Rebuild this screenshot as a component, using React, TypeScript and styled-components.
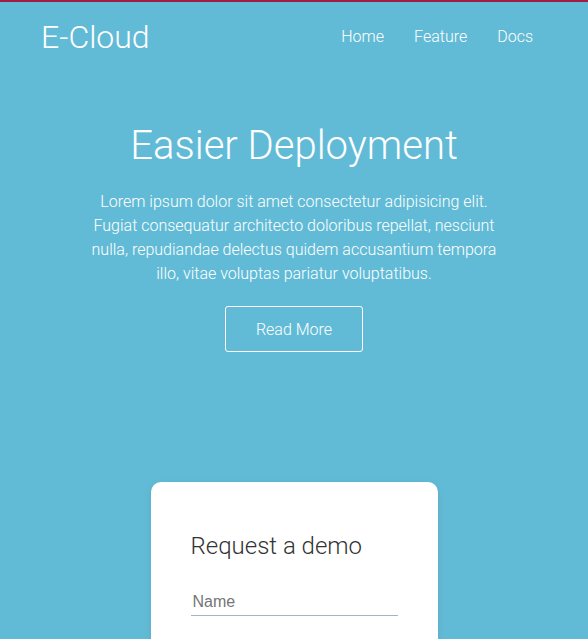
import React from "react";
import styled, { createGlobalStyle } from "styled-components";

const Global = createGlobalStyle`
  html, body { margin: 0; padding: 0; }
  body {
    background: #62bbd6;
    font-family: Roboto, "Liberation Sans", sans-serif;
    font-weight: 300;
    color: #fff;
    border-top: 2px solid #a01c45;
    min-height: 637px;
  }
  * { box-sizing: border-box; }
`;

const Page = styled.div`
  display: flex;
  flex-direction: column;
`;

const Header = styled.header`
  display: flex;
  align-items: center;
  justify-content: space-between;
  padding: 14px 55px 0 41px;
`;

const Logo = styled.div`
  font-size: 32px;
  font-weight: 300;
  line-height: 42px;
`;

const Nav = styled.nav`
  display: flex;
  gap: 30px;
  padding-bottom: 2px;
`;

const NavLink = styled.a`
  color: #fff;
  text-decoration: none;
  font-size: 16px;
  font-weight: 300;
`;

const Hero = styled.section`
  display: flex;
  flex-direction: column;
  align-items: center;
  text-align: center;
  padding-top: 64px;
`;

const Title = styled.h1`
  margin: 0;
  font-size: 40px;
  font-weight: 300;
  line-height: 48px;
`;

const Lead = styled.p`
  margin: 20px 0 0;
  max-width: 410px;
  font-size: 16px;
  line-height: 24px;
  font-weight: 300;
`;

const Button = styled.a`
  margin-top: 20px;
  width: 138px;
  height: 46px;
  display: flex;
  align-items: center;
  justify-content: center;
  border: 1px solid #fff;
  border-radius: 3px;
  font-size: 16px;
  color: #fff;
`;

const Card = styled.div`
  align-self: center;
  margin-top: 130px;
  width: 287px;
  background: #fff;
  border-radius: 10px;
  padding: 49px 40px 40px;
  box-shadow: 0 2px 8px rgba(0, 0, 0, 0.08);
  height: 180px;
`;

const CardTitle = styled.h2`
  margin: 0;
  font-size: 24px;
  font-weight: 300;
  color: #333;
  line-height: 30px;
`;

const Input = styled.input`
  display: block;
  margin-top: 30px;
  width: 207px;
  border: none;
  border-bottom: 1px solid #a5b3c9;
  padding: 2px 2px 4px;
  font-family: "Liberation Sans", Arial, sans-serif;
  font-size: 16px;
  outline: none;
  &::placeholder { color: #757575; }
`;

export default function App() {
  return (
    <Page>
      <Global />
      <Header>
        <Logo>E-Cloud</Logo>
        <Nav>
          <NavLink>Home</NavLink>
          <NavLink>Feature</NavLink>
          <NavLink>Docs</NavLink>
        </Nav>
      </Header>
      <Hero>
        <Title>Easier Deployment</Title>
        <Lead>
          Lorem ipsum dolor sit amet consectetur adipisicing elit. Fugiat consequatur architecto doloribus repellat, nesciunt nulla, repudiandae delectus quidem accusantium tempora illo, vitae voluptas pariatur voluptatibus.
        </Lead>
        <Button>Read More</Button>
      </Hero>
      <Card>
        <CardTitle>Request a demo</CardTitle>
        <Input placeholder="Name" />
      </Card>
    </Page>
  );
}
